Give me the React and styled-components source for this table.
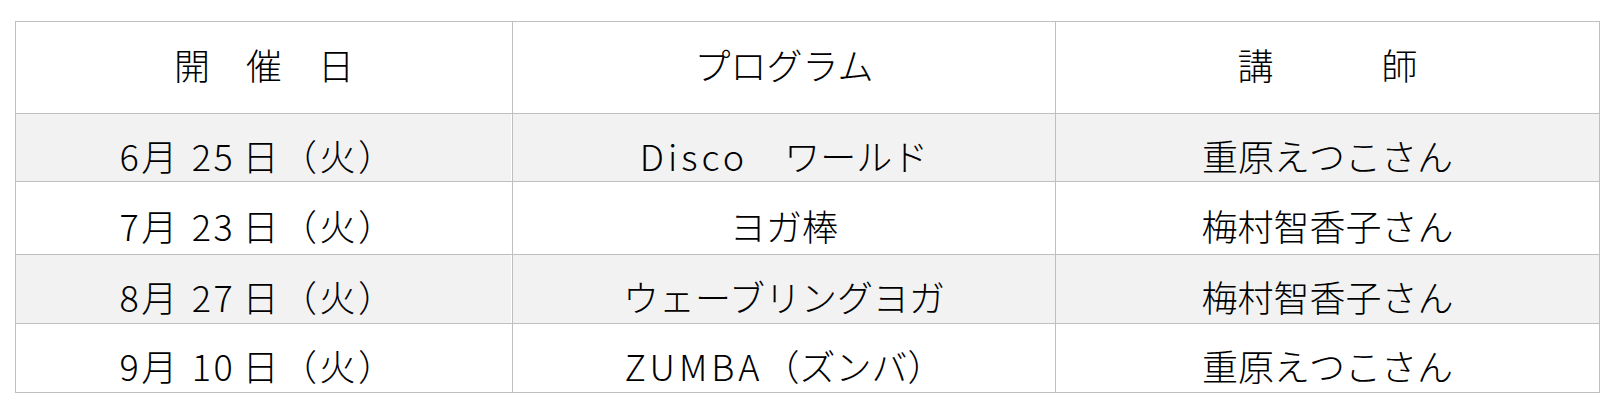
import React from "react";
import styled, { createGlobalStyle } from "styled-components";

const GlobalStyle = createGlobalStyle`
  html, body {
    margin: 0;
    padding: 0;
    background: #ffffff;
  }
  body {
    font-family: "Noto Sans CJK JP", "Noto Sans", sans-serif;
    color: #000000;
  }
`;

const Page = styled.div`
  padding: 21px 0 0 15px;
`;

const Table = styled.table`
  width: 1584px;
  table-layout: fixed;
  border-collapse: collapse;
  font-size: 36px;
  font-weight: 300;
  line-height: 1;
`;

const HeadCell = styled.th`
  box-sizing: border-box;
  height: ${(p) => p.$h}px;
  padding: 0 0 7px;
  border: 1px solid #bfbfbf;
  font-weight: 300;
  text-align: center;
  vertical-align: middle;
  white-space: pre;
`;

const Row = styled.tr`
  background: ${(p) => (p.$shaded ? "#f2f2f2" : "#ffffff")};
`;

const Cell = styled.td`
  box-sizing: border-box;
  height: ${(p) => p.$h}px;
  padding: ${(p) => (p.$date ? "14px 12px 0 0" : "14px 0 0")};
  border: 1px solid #bfbfbf;
  text-align: center;
  vertical-align: middle;
  white-space: pre;
  letter-spacing: ${(p) => (p.$date ? "2.5px" : "0")};
  box-shadow: ${(p) => (p.$edge ? "inset -1px 0 0 #ffffff" : "none")};
`;

const DayNum = styled.span`
  margin: 0 7px 0 12px;
`;

const Latin = styled.span`
  letter-spacing: 4px;
`;

const rows = [
  { month: "6", day: "25", program: [["Disco", true], ["　ワールド", false]], teacher: "重原えつこさん", h: 68 },
  { month: "7", day: "23", program: [["ヨガ棒", false]], teacher: "梅村智香子さん", h: 73 },
  { month: "8", day: "27", program: [["ウェーブリングヨガ", false]], teacher: "梅村智香子さん", h: 69 },
  { month: "9", day: "10", program: [["ZUMBA", true], ["（ズンバ）", false]], teacher: "重原えつこさん", h: 69 },
];

const App = () => {
  return (
    <Page>
      <GlobalStyle />
      <Table>
        <colgroup>
          <col style={{ width: 497 }} />
          <col style={{ width: 543 }} />
          <col style={{ width: 544 }} />
        </colgroup>
        <thead>
          <tr>
            <HeadCell $h={92}>開　催　日</HeadCell>
            <HeadCell $h={92}>プログラム</HeadCell>
            <HeadCell $h={92}>講　　　師</HeadCell>
          </tr>
        </thead>
        <tbody>
          {rows.map((r, i) => {
            const shaded = i % 2 === 0;
            return (
              <Row key={r.month} $shaded={shaded}>
                <Cell $h={r.h} $date $edge={shaded}>
                  {r.month}月<DayNum>{r.day}</DayNum>日（火）
                </Cell>
                <Cell $h={r.h}>
                  {r.program.map(([text, latin]) =>
                    latin ? <Latin key={text}>{text}</Latin> : text
                  )}
                </Cell>
                <Cell $h={r.h}>{r.teacher}</Cell>
              </Row>
            );
          })}
        </tbody>
      </Table>
    </Page>
  );
};

export default App;
